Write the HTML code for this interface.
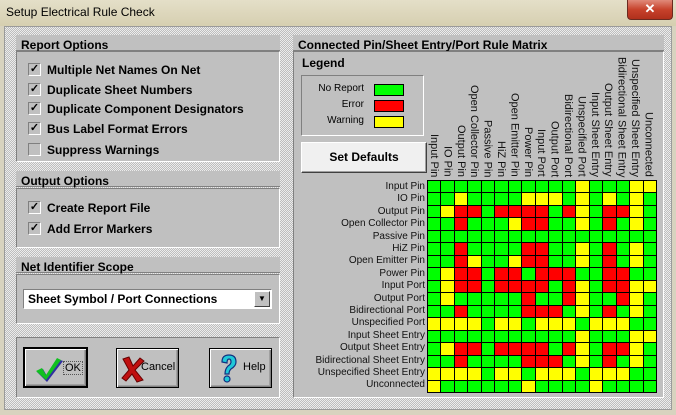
<!DOCTYPE html>
<html><head><meta charset="utf-8"><style>
*{margin:0;padding:0;box-sizing:border-box}
body{width:676px;height:415px;overflow:hidden;position:relative;font-family:"Liberation Sans",sans-serif;background:#d8d3bf}
.a{position:absolute}
#title{left:0;top:0;width:676px;height:26px;background:linear-gradient(#e4dfc8,#d6cfb0)}
#title span{position:absolute;left:6px;top:5px;font-size:12px;color:#000}
#close{left:627px;top:0;width:46px;height:20px;background:linear-gradient(#e08a7a,#c7422c 50%,#b0301c);border:1px solid #6a2a20;border-top:none;border-radius:0 0 4px 4px;color:#fff;font-weight:bold;text-align:center;font-size:13px;line-height:18px}
#body{left:4px;top:26px;width:668px;height:384px;background-color:#d0d0d0;background-image:repeating-conic-gradient(#bdbdbd 0 25%,#ececec 0 50%);background-size:2px 2px;border:1px solid #9a9a9a}
.hdr{background:#c0c0c0;font-weight:bold;font-size:12px;color:#000;padding:3px 0 0 5px;height:16px;border-bottom:1px solid #808080}
.box{background:#c0c0c0;border:1px solid #fff;border-top:1px solid #808080;border-left:1px solid #808080}
.cb{position:absolute;left:28px;width:13px;height:13px;background:#c0c0c0;border:1px solid;border-color:#808080 #fff #fff #808080;font-size:11px;line-height:11px;text-align:center;font-weight:bold}
.lbl{position:absolute;left:47px;font-size:12px;font-weight:bold;white-space:nowrap}
.grid{display:grid;grid-template-columns:repeat(17,1fr);grid-template-rows:repeat(17,1fr);gap:1px;background:#000;padding:1px}
.g{background:#00ff00}.y{background:#ffff00}.r{background:#ff0000}
.rl{position:absolute;right:0;font-size:10px;color:#111;white-space:nowrap;line-height:12px}
.cl{position:absolute;bottom:0;writing-mode:vertical-rl;font-size:11px;color:#111;white-space:nowrap;line-height:13px}
.btn{position:absolute;background:#c0c0c0;border:1px solid #000;box-shadow:inset 1px 1px 0 #fff,inset -1px -1px 0 #808080,inset -2px -2px 0 #a0a0a0;font-size:11px}
</style></head><body>
<div id="title" class="a"><span>Setup Electrical Rule Check</span></div>
<div id="close" class="a">✕</div>
<div id="body" class="a"></div>

<div class="a hdr" style="left:16px;top:35px;width:264px">Report Options</div>
<div class="a box" style="left:16px;top:51px;width:264px;height:111px"></div>
<div class="cb" style="top:63px">✓</div><div class="lbl" style="top:63px">Multiple Net Names On Net</div>
<div class="cb" style="top:83px">✓</div><div class="lbl" style="top:83px">Duplicate Sheet Numbers</div>
<div class="cb" style="top:102px">✓</div><div class="lbl" style="top:102px">Duplicate Component Designators</div>
<div class="cb" style="top:122px">✓</div><div class="lbl" style="top:122px">Bus Label Format Errors</div>
<div class="cb" style="top:143px"></div><div class="lbl" style="top:143px">Suppress Warnings</div>

<div class="a hdr" style="left:16px;top:171px;width:264px">Output Options</div>
<div class="a box" style="left:16px;top:188px;width:264px;height:60px"></div>
<div class="cb" style="top:201px">✓</div><div class="lbl" style="top:201px">Create Report File</div>
<div class="cb" style="top:222px">✓</div><div class="lbl" style="top:222px">Add Error Markers</div>

<div class="a hdr" style="left:16px;top:257px;width:264px">Net Identifier Scope</div>
<div class="a box" style="left:16px;top:274px;width:264px;height:50px"></div>
<div class="a" style="left:23px;top:289px;width:249px;height:20px;background:#fff;border:1px solid;border-color:#808080 #fff #fff #808080;font-size:12px;font-weight:bold;padding:2px 0 0 4px">Sheet Symbol / Port Connections</div>
<div class="a" style="left:254px;top:291px;width:16px;height:16px;background:#c0c0c0;border:1px solid;border-color:#fff #404040 #404040 #fff;font-size:8px;text-align:center;line-height:14px">▼</div>

<div class="a box" style="left:16px;top:337px;width:264px;height:61px"></div>
<div class="btn" style="left:23px;top:347px;width:65px;height:41px;border:2px solid #000">
<svg class="a" style="left:8px;top:6px" width="30" height="28" viewBox="0 0 30 28"><path d="M3 16 L9 13 L13 20 L24 3 L29 5 L13 26 Z" fill="#3030a0" transform="translate(1,1)"/><path d="M3 16 L9 13 L13 20 L24 3 L28 5 L13 25 Z" fill="#10c020"/></svg>
<span class="a" style="left:38px;top:12px;border:1px dotted #555;padding:0 1px">OK</span></div>
<div class="btn" style="left:116px;top:348px;width:63px;height:40px">
<svg class="a" style="left:4px;top:6px" width="24" height="28" viewBox="0 0 24 28"><path d="M2 4 L8 2 L12 11 L19 3 L23 6 L14 15 L22 25 L16 27 L11 19 L5 26 L1 23 L8 15 Z" fill="#c01010" stroke="#600" stroke-width="1"/></svg>
<span class="a" style="left:24px;top:12px">Cancel</span></div>
<div class="btn" style="left:209px;top:348px;width:63px;height:40px">
<svg class="a" style="left:9px;top:4px" width="20" height="32" viewBox="0 0 20 32"><path d="M3 9 Q3 2 10 2 Q17 2 17 9 Q17 13 12 16 Q10 18 10 21 L6 21 Q6 16 9 13 Q12 11 12 9 Q12 6 10 6 Q8 6 8 10 Z" fill="#20c8d8" stroke="#103080" stroke-width="1.2"/><circle cx="8" cy="26" r="3" fill="#20c8d8" stroke="#103080" stroke-width="1.2"/></svg>
<span class="a" style="left:33px;top:12px">Help</span></div>

<div class="a hdr" style="left:293px;top:35px;width:371px">Connected Pin/Sheet Entry/Port Rule Matrix</div>
<div class="a box" style="left:293px;top:51px;width:371px;height:347px"></div>
<div class="a" style="left:302px;top:56px;font-size:12px;font-weight:bold">Legend</div>
<div class="a" style="left:301px;top:75px;width:123px;height:61px;border:1px solid;border-color:#808080 #fff #fff #808080"></div>
<div class="a" style="left:300px;top:83px;width:64px;text-align:right;font-size:10px">No Report</div>
<div class="a" style="left:300px;top:99px;width:64px;text-align:right;font-size:10px">Error</div>
<div class="a" style="left:300px;top:115px;width:64px;text-align:right;font-size:10px">Warning</div>
<div class="a g" style="left:374px;top:84px;width:30px;height:12px;border:1px solid #000"></div>
<div class="a r" style="left:374px;top:100px;width:30px;height:12px;border:1px solid #000"></div>
<div class="a y" style="left:374px;top:116px;width:30px;height:12px;border:1px solid #000"></div>
<div class="a" style="left:301px;top:142px;width:126px;height:31px;background:#f0f0f0;border:1px solid;border-color:#fff #404040 #404040 #fff;box-shadow:inset -1px -1px 0 #a0a0a0;font-size:12px;font-weight:bold;text-align:center;line-height:28px">Set Defaults</div>

<div class="a" style="left:427px;top:60px;width:230px;height:117px">
<div class="cl" style="left:0px">Input Pin</div>
<div class="cl" style="left:13.4px">IO Pin</div>
<div class="cl" style="left:26.8px">Output Pin</div>
<div class="cl" style="left:40.2px">Open Collector Pin</div>
<div class="cl" style="left:53.6px">Passive Pin</div>
<div class="cl" style="left:67px">HiZ Pin</div>
<div class="cl" style="left:80.4px">Open Emitter Pin</div>
<div class="cl" style="left:93.8px">Power Pin</div>
<div class="cl" style="left:107.2px">Input Port</div>
<div class="cl" style="left:120.6px">Output Port</div>
<div class="cl" style="left:134px">Bidirectional Port</div>
<div class="cl" style="left:147.4px">Unspecified Port</div>
<div class="cl" style="left:160.8px">Input Sheet Entry</div>
<div class="cl" style="left:174.2px">Output Sheet Entry</div>
<div class="cl" style="left:187.6px">Bidirectional Sheet Entry</div>
<div class="cl" style="left:201px">Unspecified Sheet Entry</div>
<div class="cl" style="left:214.4px">Unconnected</div>
</div>

<div class="a" style="left:300px;top:181px;width:125px;height:213px">
<div class="rl" style="top:0px">Input Pin</div>
<div class="rl" style="top:12.4px">IO Pin</div>
<div class="rl" style="top:24.8px">Output Pin</div>
<div class="rl" style="top:37.2px">Open Collector Pin</div>
<div class="rl" style="top:49.6px">Passive Pin</div>
<div class="rl" style="top:62px">HiZ Pin</div>
<div class="rl" style="top:74.4px">Open Emitter Pin</div>
<div class="rl" style="top:86.8px">Power Pin</div>
<div class="rl" style="top:99.2px">Input Port</div>
<div class="rl" style="top:111.6px">Output Port</div>
<div class="rl" style="top:124px">Bidirectional Port</div>
<div class="rl" style="top:136.4px">Unspecified Port</div>
<div class="rl" style="top:148.8px">Input Sheet Entry</div>
<div class="rl" style="top:161.2px">Output Sheet Entry</div>
<div class="rl" style="top:173.6px">Bidirectional Sheet Entry</div>
<div class="rl" style="top:186px">Unspecified Sheet Entry</div>
<div class="rl" style="top:198.4px">Unconnected</div>
</div>

<div class="a grid" style="left:427px;top:180px;width:230px;height:213px">
<i class="g"></i><i class="g"></i><i class="g"></i><i class="g"></i><i class="g"></i><i class="g"></i><i class="g"></i><i class="g"></i><i class="g"></i><i class="g"></i><i class="g"></i><i class="y"></i><i class="g"></i><i class="g"></i><i class="g"></i><i class="y"></i><i class="y"></i>
<i class="g"></i><i class="g"></i><i class="y"></i><i class="g"></i><i class="g"></i><i class="g"></i><i class="g"></i><i class="y"></i><i class="y"></i><i class="y"></i><i class="g"></i><i class="y"></i><i class="g"></i><i class="y"></i><i class="g"></i><i class="y"></i><i class="g"></i>
<i class="g"></i><i class="y"></i><i class="r"></i><i class="r"></i><i class="g"></i><i class="r"></i><i class="r"></i><i class="r"></i><i class="r"></i><i class="g"></i><i class="r"></i><i class="y"></i><i class="g"></i><i class="r"></i><i class="r"></i><i class="y"></i><i class="g"></i>
<i class="g"></i><i class="g"></i><i class="r"></i><i class="g"></i><i class="g"></i><i class="g"></i><i class="y"></i><i class="r"></i><i class="r"></i><i class="g"></i><i class="g"></i><i class="y"></i><i class="g"></i><i class="r"></i><i class="g"></i><i class="y"></i><i class="g"></i>
<i class="g"></i><i class="g"></i><i class="g"></i><i class="g"></i><i class="g"></i><i class="g"></i><i class="g"></i><i class="g"></i><i class="g"></i><i class="g"></i><i class="g"></i><i class="g"></i><i class="g"></i><i class="g"></i><i class="g"></i><i class="g"></i><i class="g"></i>
<i class="g"></i><i class="g"></i><i class="r"></i><i class="g"></i><i class="g"></i><i class="g"></i><i class="g"></i><i class="r"></i><i class="r"></i><i class="g"></i><i class="g"></i><i class="y"></i><i class="g"></i><i class="r"></i><i class="g"></i><i class="y"></i><i class="g"></i>
<i class="g"></i><i class="g"></i><i class="r"></i><i class="y"></i><i class="g"></i><i class="g"></i><i class="y"></i><i class="r"></i><i class="r"></i><i class="g"></i><i class="g"></i><i class="y"></i><i class="g"></i><i class="r"></i><i class="g"></i><i class="y"></i><i class="g"></i>
<i class="g"></i><i class="y"></i><i class="r"></i><i class="r"></i><i class="g"></i><i class="r"></i><i class="r"></i><i class="g"></i><i class="r"></i><i class="r"></i><i class="r"></i><i class="g"></i><i class="g"></i><i class="r"></i><i class="r"></i><i class="g"></i><i class="g"></i>
<i class="g"></i><i class="y"></i><i class="r"></i><i class="r"></i><i class="g"></i><i class="r"></i><i class="r"></i><i class="r"></i><i class="r"></i><i class="g"></i><i class="r"></i><i class="y"></i><i class="g"></i><i class="r"></i><i class="r"></i><i class="y"></i><i class="y"></i>
<i class="g"></i><i class="y"></i><i class="g"></i><i class="g"></i><i class="g"></i><i class="g"></i><i class="g"></i><i class="r"></i><i class="g"></i><i class="g"></i><i class="r"></i><i class="y"></i><i class="g"></i><i class="g"></i><i class="r"></i><i class="y"></i><i class="g"></i>
<i class="g"></i><i class="g"></i><i class="r"></i><i class="g"></i><i class="g"></i><i class="g"></i><i class="g"></i><i class="r"></i><i class="r"></i><i class="r"></i><i class="g"></i><i class="y"></i><i class="g"></i><i class="r"></i><i class="g"></i><i class="y"></i><i class="g"></i>
<i class="y"></i><i class="y"></i><i class="y"></i><i class="y"></i><i class="g"></i><i class="y"></i><i class="y"></i><i class="g"></i><i class="y"></i><i class="y"></i><i class="y"></i><i class="g"></i><i class="y"></i><i class="y"></i><i class="y"></i><i class="g"></i><i class="g"></i>
<i class="g"></i><i class="g"></i><i class="g"></i><i class="g"></i><i class="g"></i><i class="g"></i><i class="g"></i><i class="g"></i><i class="g"></i><i class="g"></i><i class="g"></i><i class="y"></i><i class="g"></i><i class="g"></i><i class="g"></i><i class="y"></i><i class="y"></i>
<i class="g"></i><i class="y"></i><i class="r"></i><i class="r"></i><i class="g"></i><i class="r"></i><i class="r"></i><i class="r"></i><i class="r"></i><i class="g"></i><i class="r"></i><i class="y"></i><i class="g"></i><i class="r"></i><i class="r"></i><i class="y"></i><i class="g"></i>
<i class="g"></i><i class="g"></i><i class="r"></i><i class="g"></i><i class="g"></i><i class="g"></i><i class="g"></i><i class="r"></i><i class="r"></i><i class="r"></i><i class="g"></i><i class="y"></i><i class="g"></i><i class="r"></i><i class="g"></i><i class="y"></i><i class="g"></i>
<i class="y"></i><i class="y"></i><i class="y"></i><i class="y"></i><i class="g"></i><i class="y"></i><i class="y"></i><i class="g"></i><i class="y"></i><i class="y"></i><i class="y"></i><i class="g"></i><i class="y"></i><i class="y"></i><i class="y"></i><i class="g"></i><i class="g"></i>
<i class="y"></i><i class="g"></i><i class="g"></i><i class="g"></i><i class="g"></i><i class="g"></i><i class="g"></i><i class="y"></i><i class="g"></i><i class="g"></i><i class="g"></i><i class="g"></i><i class="y"></i><i class="g"></i><i class="g"></i><i class="g"></i><i class="g"></i>
</div>
</body></html>
